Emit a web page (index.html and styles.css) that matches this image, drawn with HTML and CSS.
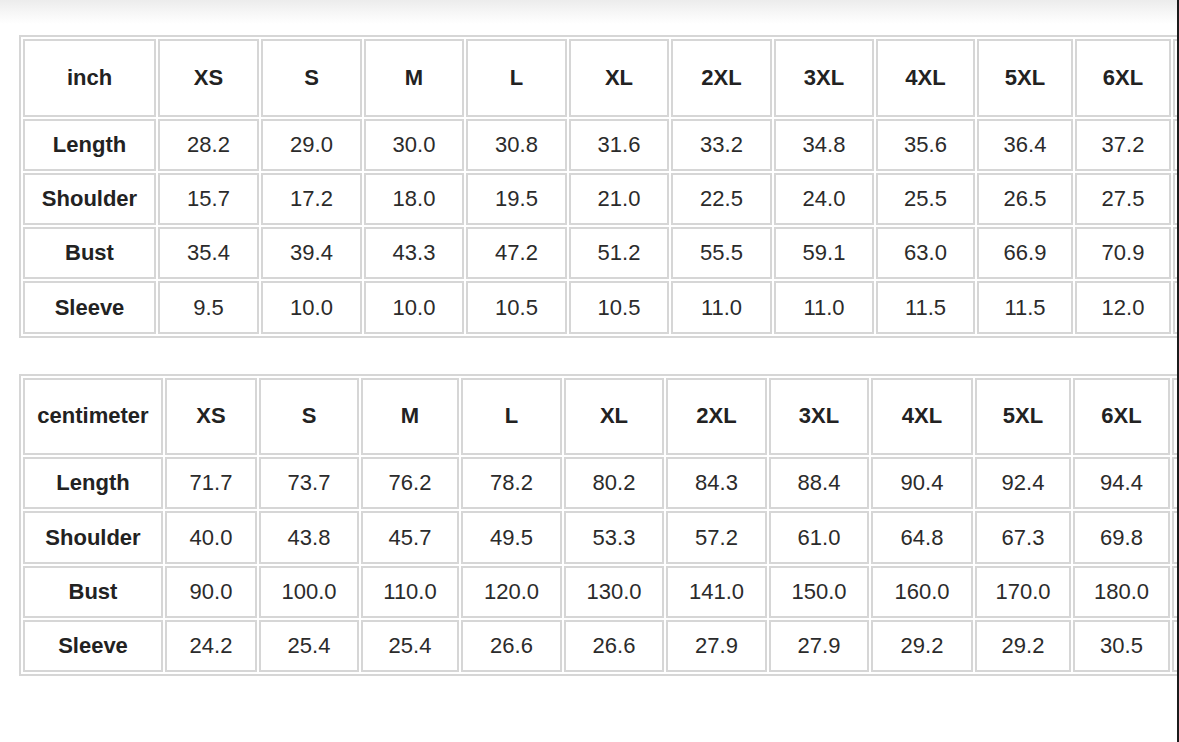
FILE: index.html
```html
<!DOCTYPE html>
<html>
<head>
<meta charset="utf-8">
<link rel="stylesheet" href="styles.css">
</head>
<body>
<div class="sheet">
  <table class="size-table inch">
    <colgroup>
      <col class="c0"><col class="c1"><col class="c2"><col class="c3"><col class="c4"><col class="c5"><col class="c6"><col class="c7"><col class="c8"><col class="c9"><col class="c10"><col class="c11">
    </colgroup>
    <tr class="head"><th>inch</th><th>XS</th><th>S</th><th>M</th><th>L</th><th>XL</th><th>2XL</th><th>3XL</th><th>4XL</th><th>5XL</th><th>6XL</th><th></th></tr>
    <tr><th>Length</th><td>28.2</td><td>29.0</td><td>30.0</td><td>30.8</td><td>31.6</td><td>33.2</td><td>34.8</td><td>35.6</td><td>36.4</td><td>37.2</td><td></td></tr>
    <tr><th>Shoulder</th><td>15.7</td><td>17.2</td><td>18.0</td><td>19.5</td><td>21.0</td><td>22.5</td><td>24.0</td><td>25.5</td><td>26.5</td><td>27.5</td><td></td></tr>
    <tr><th>Bust</th><td>35.4</td><td>39.4</td><td>43.3</td><td>47.2</td><td>51.2</td><td>55.5</td><td>59.1</td><td>63.0</td><td>66.9</td><td>70.9</td><td></td></tr>
    <tr><th>Sleeve</th><td>9.5</td><td>10.0</td><td>10.0</td><td>10.5</td><td>10.5</td><td>11.0</td><td>11.0</td><td>11.5</td><td>11.5</td><td>12.0</td><td></td></tr>
  </table>

  <table class="size-table cm">
    <colgroup>
      <col class="c0"><col class="c1"><col class="c2"><col class="c3"><col class="c4"><col class="c5"><col class="c6"><col class="c7"><col class="c8"><col class="c9"><col class="c10"><col class="c11">
    </colgroup>
    <tr class="head"><th>centimeter</th><th>XS</th><th>S</th><th>M</th><th>L</th><th>XL</th><th>2XL</th><th>3XL</th><th>4XL</th><th>5XL</th><th>6XL</th><th></th></tr>
    <tr><th>Length</th><td>71.7</td><td>73.7</td><td>76.2</td><td>78.2</td><td>80.2</td><td>84.3</td><td>88.4</td><td>90.4</td><td>92.4</td><td>94.4</td><td></td></tr>
    <tr><th>Shoulder</th><td>40.0</td><td>43.8</td><td>45.7</td><td>49.5</td><td>53.3</td><td>57.2</td><td>61.0</td><td>64.8</td><td>67.3</td><td>69.8</td><td></td></tr>
    <tr><th>Bust</th><td>90.0</td><td>100.0</td><td>110.0</td><td>120.0</td><td>130.0</td><td>141.0</td><td>150.0</td><td>160.0</td><td>170.0</td><td>180.0</td><td></td></tr>
    <tr><th>Sleeve</th><td>24.2</td><td>25.4</td><td>25.4</td><td>26.6</td><td>26.6</td><td>27.9</td><td>27.9</td><td>29.2</td><td>29.2</td><td>30.5</td><td></td></tr>
  </table>
</div>
</body>
</html>
```

FILE: styles.css
```css
html, body {
  margin: 0;
  padding: 0;
  background: #ffffff;
}

.sheet {
  width: 1158px;
  height: 707px;
  padding: 35px 0 0 19px;
  overflow: hidden;
  border-right: 2px solid #1b1b1b;
  background: linear-gradient(to bottom, #ececec 0px, #f6f6f6 12px, #ffffff 24px) no-repeat;
  font-family: "Liberation Sans", Arial, sans-serif;
  color: #2b2b2b;
}

.size-table {
  border-collapse: separate;
  border-spacing: 2px;
  border: 2px solid #d6d6d6;
  table-layout: fixed;
  font-size: 22px;
}

.size-table.inch {
  width: 1258px;
}

.size-table.cm {
  width: 1257px;
  margin-top: 36px;
}

.size-table th,
.size-table td {
  border: 2px solid #d6d6d6;
  padding: 0;
  text-align: center;
  vertical-align: middle;
  box-sizing: border-box;
}

.size-table th {
  font-weight: bold;
  color: #222222;
}

.size-table td {
  font-weight: normal;
}

.size-table tr {
  height: 52.3px;
}

.size-table tr.head {
  height: 77.5px;
}

.inch .c0 { width: 133px; }
.inch .c1 { width: 101px; }
.inch .c2 { width: 101px; }
.inch .c3 { width: 100px; }
.inch .c4 { width: 101px; }
.inch .c5 { width: 100px; }
.inch .c6 { width: 101px; }
.inch .c7 { width: 100px; }
.inch .c8 { width: 99px; }
.inch .c9 { width: 96px; }
.inch .c10 { width: 96px; }
.inch .c11 { width: 100px; }

.cm .c0 { width: 140px; }
.cm .c1 { width: 92px; }
.cm .c2 { width: 100px; }
.cm .c3 { width: 98px; }
.cm .c4 { width: 101px; }
.cm .c5 { width: 100px; }
.cm .c6 { width: 101px; }
.cm .c7 { width: 100px; }
.cm .c8 { width: 102px; }
.cm .c9 { width: 96px; }
.cm .c10 { width: 97px; }
.cm .c11 { width: 100px; }
```
